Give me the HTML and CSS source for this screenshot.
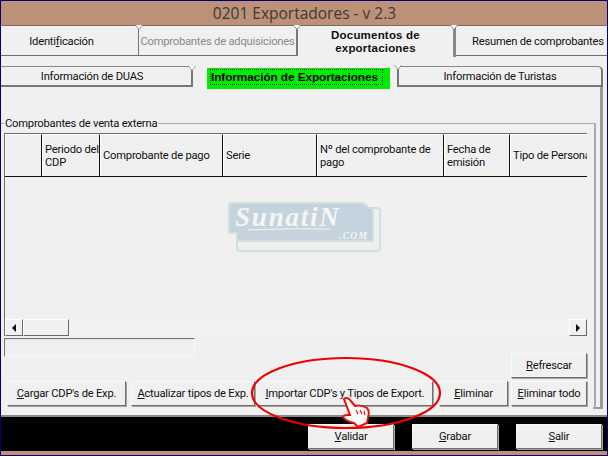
FILE: index.html
```html
<!DOCTYPE html>
<html lang="es">
<head>
<meta charset="utf-8">
<title>0201 Exportadores - v 2.3</title>
<link rel="stylesheet" href="styles.css">
</head>
<body>
<div class="window">
  <div class="titlebar">0201 Exportadores - v 2.3</div>
  <div class="tabs">
    <div class="tab t1 tip">Identi<u>f</u>icación</div>
    <div class="tab t2 tip muted">Comprobantes de adquisiciones</div>
    <div class="tab t3 tip active">Documentos de<br>exportaciones</div>
    <div class="tab t4">Resumen de comprobantes</div>
  </div>
  <div class="subtabs">
    <div class="subtab s1 tip">Información de DUAS</div>
    <div class="subtab s2 tip"><span class="green"><b class="focus">Información de Exportaciones</b></span></div>
    <div class="subtab s3">Información de Turistas</div>
  </div>
  <div class="panel">
    <div class="subpanel">
      <div class="group">
        <div class="legend"><span>Comprobantes de venta externa</span></div>
        <div class="grid">
          <div class="head">
            <div class="th c0"></div>
            <div class="th c1">Periodo del<br>CDP</div>
            <div class="th c2">Comprobante de pago</div>
            <div class="th c3">Serie</div>
            <div class="th c4">Nº del comprobante de pago</div>
            <div class="th c5">Fecha de emisión</div>
            <div class="th c6">Tipo de Persona</div>
          </div>
          <div class="body">
            <svg class="mark" width="153" height="50" viewBox="0 0 153 50">
              <rect x="9" y="6" width="143" height="43" rx="3" fill="#f0f0f0" stroke="#cfe2d8" stroke-width="2"/>
              <path d="M1 3 Q1 1 3 1 H134 Q136 1 138 3 L141 6 H143 Q145 6 145 9 V37 Q145 39 143 39 H12 Q9 39 9 36 V31 H3 Q1 31 1 29 Z" fill="#c5d3df" stroke="#cfe2d8" stroke-width="2"/>
              <path d="M20 28 Q60 26 102 27" fill="none" stroke="#f4f6f5" stroke-width="1"/>
              <text x="7" y="24" class="mark-name">SunatiN</text>
              <text x="111" y="37" class="mark-com">.COM</text>
            </svg>
          </div>
          <div class="hscroll">
            <div class="arrow"><i class="tri-l"></i></div>
            <div class="thumb"></div>
            <div class="track"></div>
            <div class="arrow"><i class="tri-r"></i></div>
          </div>
        </div>
        <div class="statusbox"></div>
        <div class="actions-top"><button class="btn b-ref"><u>R</u>efrescar</button></div>
        <div class="actions">
          <button class="btn b-car"><u>C</u>argar CDP's de Exp.</button>
          <button class="btn b-act"><u>A</u>ctualizar tipos de Exp.</button>
          <button class="btn b-imp"><u>I</u>mportar CDP's y Tipos de Export.</button>
          <button class="btn b-eli"><u>E</u>liminar</button>
          <button class="btn b-ref"><u>E</u>liminar todo</button>
        </div>
      </div>
    </div>
  </div>
  <div class="footer">
    <button class="btn f-btn"><u>V</u>alidar</button>
    <button class="btn f-btn"><u>G</u>rabar</button>
    <button class="btn f-btn"><u>S</u>alir</button>
  </div>
  <div class="strip"></div>
  <svg class="ellipse" width="192" height="74" viewBox="0 0 192 74">
    <ellipse cx="96" cy="37" rx="94" ry="35" fill="none" stroke="#ee0000" stroke-width="2.2"/>
  </svg>
  <svg class="hand" width="28" height="31" viewBox="0 0 28 31">
    <path d="M2 2 C4 0 6 1 8 3 L13 9 C16 8 22 9 25 11 C27 13 27 17 26 21 L25 26 L16 30 L12 26 C8 25 3 23 1 20 C2 17 5 18 8 18 Z" fill="#fff" stroke="#e4100c" stroke-width="2"/>
    <path d="M14 13 L16 17 M18 13 L20 17 M22 14 L23 18" stroke="#e4100c" stroke-width="1.2"/>
  </svg>
</div>
</body>
</html>
```

FILE: styles.css
```css
* { box-sizing: border-box; }
html, body { margin: 0; padding: 0; }
body { width: 608px; height: 456px; overflow: hidden; background: #f0f0f0; font-family: Roboto, "Liberation Sans", Arial, sans-serif; font-size: 11.2px; letter-spacing: -.22px; color: #111; }
.window { position: relative; width: 608px; height: 456px; border: 1px solid #00007f; display: flex; flex-direction: column; background: #f0f0f0; }
.titlebar { height: 25px; background: #bc9177; border-bottom: 1px solid #7d6a5e; color: #3a3a3a; font-size: 15.5px; letter-spacing: 0; font-family: "Open Sans", sans-serif; display: flex; align-items: center; justify-content: center; flex: none; padding-left: 1px; }
.tabs { display: flex; height: 31px; flex: none; }
.tab { position: relative; display: flex; flex: none; align-items: center; justify-content: center; text-align: center; border-bottom: 1px solid #6f6f6f; height: 30px; white-space: nowrap; padding-top: 1px; }
.tip::before { content: ""; position: absolute; right: -5px; top: -1px; border: 4px solid transparent; border-top: 5px solid #888; border-bottom: 0; z-index: 2; }
.tip::after { content: ""; position: absolute; right: -4px; top: -1px; border: 3px solid transparent; border-top: 4px solid #fff; border-bottom: 0; z-index: 3; }
.t1 { width: 138px; border-right: 1px solid #777; padding-right: 16px; }
.t2 { width: 159px; border-right: 2px solid #777; }
.t3 { width: 158px; border-bottom: 0; font-family: "Liberation Sans", sans-serif; font-size: 11.5px; letter-spacing: .2px; font-weight: bold; line-height: 13px; border-right: 3px solid #888; height: 31px; padding-top: 0; }
.t4 { flex: 1 1 0; min-width: 0; justify-content: flex-start; padding-left: 16px; }
.muted { color: #8a8a8a; }
.subtabs { display: flex; height: 21px; margin-top: 9px; flex: none; }
.subtab { position: relative; display: flex; align-items: center; justify-content: center; height: 21px; border-top: 1px solid #888; border-bottom: 2px solid #777; white-space: nowrap; }
.s1 { width: 192px; border-right: 2px solid #777; padding-right: 8px; }
.s2 { width: 204px; border: 0; justify-content: flex-start; padding-left: 14px; align-items: flex-start; padding-top: 2px; }
.s3 { width: 206px; border-left: 2px solid #777; border-right: 2px solid #777; border-radius: 0 5px 0 0; }
.green { display: block; width: 183px; height: 21px; background: #00ec00; padding: 1px 0 0 3px; color: #000; z-index: 1; }
.focus { display: block; width: 173px; height: 16px; font-family: "Liberation Sans", sans-serif; font-size: 11.8px; letter-spacing: -.08px; line-height: 14px; border: 1px dotted #333; overflow: hidden; }
.panel { flex: 1; border-bottom: 2px solid #8a8a8a; min-height: 0; }
.subpanel { width: 602px; height: 322px; border-right: 3px solid #999; background: linear-gradient(#999, #999) no-repeat right bottom / 7px 2px; padding-top: 36px; }
.group { height: 100%; width: 595px; border-top: 1px solid #aaa; border-right: 2px solid #aaa; padding-left: 3px; position: relative; }
.legend { height: 10px; margin-top: -7px; line-height: 13px; white-space: nowrap; }
.legend span { background: #f0f0f0; padding: 0 1px; }
.grid { width: 583px; height: 203px; margin-top: 6px; display: flex; flex-direction: column; border-top: 1px solid #6f6f6f; border-left: 1px solid #6f6f6f; }
.head { display: flex; height: 43px; flex: none; border-bottom: 1px solid #111; }
.th { display: flex; align-items: center; height: 42px; padding: 0 2px; border-top: 1px solid #fff; border-left: 1px solid #fff; border-right: 1px solid #111; line-height: 13px; flex: none; overflow: hidden; }
.c0 { width: 37px; }
.c1 { width: 58px; display: block; padding-top: 8px; white-space: nowrap; }
.c2 { width: 123px; }
.c3 { width: 94px; }
.c4 { width: 127px; }
.c5 { width: 66px; }
.c6 { width: 77px; border-right: 0; white-space: nowrap; }
.body { flex: 1; min-height: 0; padding: 25px 0 0 223px; }
.mark { display: block; }
.mark-name { font-family: "Liberation Serif", serif; font-style: italic; font-weight: bold; font-size: 27px; fill: #f4f6f5; letter-spacing: 1.8px; }
.mark-com { font-family: "Liberation Serif", serif; font-style: italic; font-weight: bold; font-size: 9.5px; fill: #f4f6f5; letter-spacing: 1.3px; }
.hscroll { display: flex; height: 17px; flex: none; }
.arrow { width: 18px; height: 17px; border: 1px solid; border-color: #fff #696969 #696969 #fff; display: flex; align-items: center; justify-content: center; flex: none; }
.tri-l { border: 4px solid transparent; border-right: 4px solid #000; border-left: 0; }
.tri-r { border: 4px solid transparent; border-left: 4px solid #000; border-right: 0; }
.thumb { width: 46px; height: 17px; border: 1px solid; border-color: #fff #696969 #696969 #fff; flex: none; }
.track { flex: 1; height: 16px; background: repeating-conic-gradient(#f7f7f7 0 25%, #ececec 0 50%) 0 0 / 2px 2px; }
.statusbox { width: 191px; height: 19px; margin-top: 2px; border: 1px solid; border-color: #777 #f8f8f8 #f8f8f8 #777; box-shadow: inset 0 1px 0 #ddd; }
.actions-top { display: flex; justify-content: flex-end; margin-top: -4px; padding-right: 7px; height: 25px; }
.actions { display: flex; margin-top: 3px; padding-left: 3px; }
.btn { flex: none; height: 25px; padding: 0; font: inherit; letter-spacing: inherit; color: #111; background: #f0f0f0; border: 1px solid; border-color: #f8f8f8 #6f6f6f #6f6f6f #f8f8f8; box-shadow: 1px 1px 0 #a5a5a5; white-space: nowrap; }
.b-car { width: 119px; }
.b-act { width: 124px; margin-left: 5px; }
.b-imp { width: 176px; margin-left: 2px; }
.b-eli { width: 69px; margin-left: 6px; }
.b-ref { width: 76px; margin-left: 3px; }
.actions-top .b-ref { margin-left: 0; }
.footer { height: 34px; flex: none; background: #000; display: flex; justify-content: flex-end; align-items: flex-end; gap: 18px; padding: 0 5px 2px 0; }
.f-btn { width: 86px; height: 25px; }
.strip { height: 4px; flex: none; background: #bc9177; }
.ellipse { position: absolute; left: 249px; top: 355px; }
.hand { position: absolute; left: 341px; top: 396px; }
```
